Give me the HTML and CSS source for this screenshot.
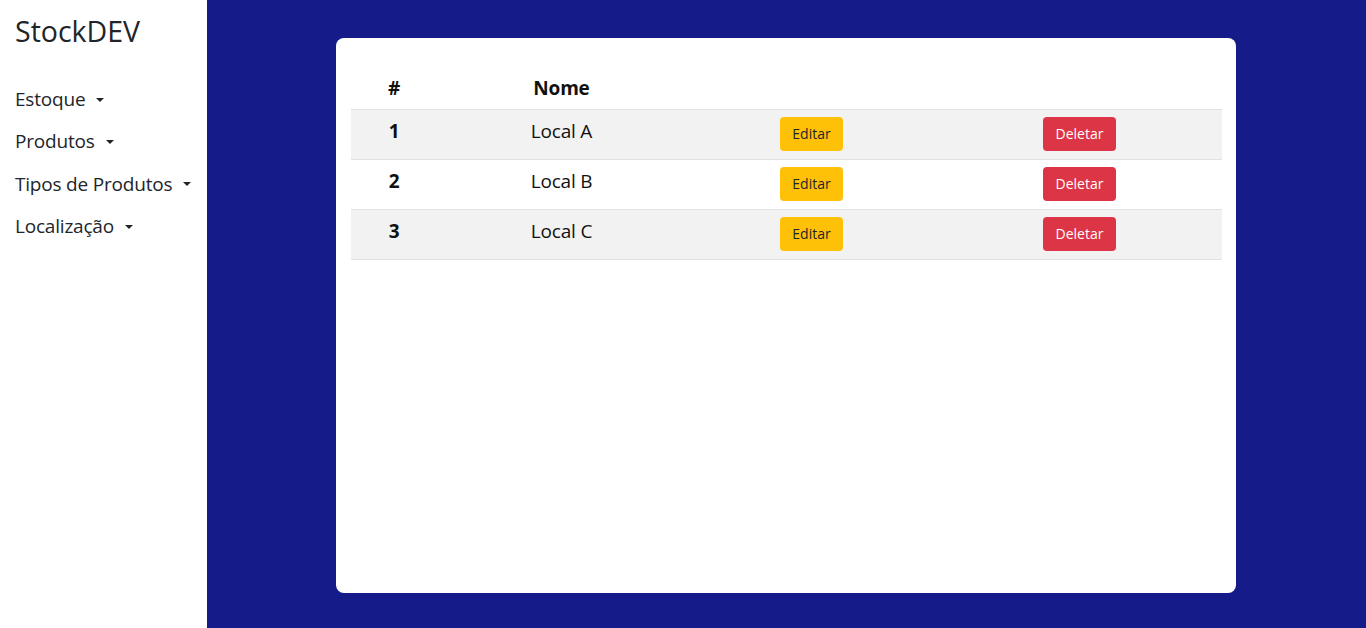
FILE: index.html
```html
<!DOCTYPE html>
<html lang="pt-BR">
<head>
<meta charset="utf-8">
<title>StockDEV</title>
<link rel="stylesheet" href="styles.css">
</head>
<body>
<div class="layout">
  <aside class="sidebar">
    <div class="brand">StockDEV</div>
    <nav class="nav">
      <a class="nav-item">Estoque<span class="caret"></span></a>
      <a class="nav-item">Produtos<span class="caret"></span></a>
      <a class="nav-item">Tipos de Produtos<span class="caret"></span></a>
      <a class="nav-item">Localização<span class="caret"></span></a>
    </nav>
  </aside>
  <main class="main">
    <section class="card">
      <table class="table">
        <colgroup>
          <col class="c1"><col class="c2"><col class="c3"><col class="c4">
        </colgroup>
        <thead>
          <tr><th>#</th><th>Nome</th><th></th><th></th></tr>
        </thead>
        <tbody>
          <tr class="odd"><th>1</th><td>Local A</td><td><button class="btn btn-warning">Editar</button></td><td><button class="btn btn-danger">Deletar</button></td></tr>
          <tr><th>2</th><td>Local B</td><td><button class="btn btn-warning">Editar</button></td><td><button class="btn btn-danger">Deletar</button></td></tr>
          <tr class="odd"><th>3</th><td>Local C</td><td><button class="btn btn-warning">Editar</button></td><td><button class="btn btn-danger">Deletar</button></td></tr>
        </tbody>
      </table>
    </section>
  </main>
</div>
</body>
</html>
```
FILE: styles.css
```css
* { box-sizing: border-box; }
html, body { margin: 0; padding: 0; }
body {
  font-family: "Open Sans", "Liberation Sans", sans-serif;
  color: #212529;
  background: #fff;
}
.layout {
  display: flex;
  height: 628px;
}
.sidebar {
  width: 207px;
  flex: 0 0 207px;
  background: #fff;
  padding: 9px 0 0 15px;
}
.brand {
  font-size: 28.5px;
  line-height: 45px;
  color: #212529;
}
.nav {
  display: flex;
  flex-direction: column;
  margin-top: 24px;
}
.nav-item {
  font-size: 19px;
  letter-spacing: -0.2px;
  line-height: 30.33px;
  padding: 6px 0;
  color: #212529;
  display: flex;
  align-items: center;
}
.caret {
  display: inline-block;
  width: 0;
  height: 0;
  margin-left: 11px;
  margin-top: 1px;
  border-top: 4.5px solid #212529;
  border-left: 4.5px solid transparent;
  border-right: 4.5px solid transparent;
}
.main {
  flex: 1;
  background: #161b8a;
  padding-top: 38px;
}
.card {
  width: 900px;
  height: 555px;
  margin-left: 129px;
  background: #fff;
  border-radius: 8px;
  padding: 29px 14px 0 15px;
}
.table {
  width: 100%;
  table-layout: fixed;
  border-collapse: collapse;
  color: #111;
}
.c1 { width: 86px; }
.c2 { width: 249px; }
.c3 { width: 251px; }
.c4 { width: 285px; }
.table th, .table td {
  font-size: 19px;
  letter-spacing: -0.2px;
  line-height: 26px;
  text-align: center;
  vertical-align: top;
}
.table thead th { padding: 8px; border-bottom: 1px solid #dee2e6; }
.table tbody th, .table tbody td { padding: 7px 8px 8px; line-height: 28px; }
.table th { font-weight: 700; }
.table td { font-weight: 400; }
.table tbody tr { border-bottom: 1px solid #dee2e6; }
.table tbody tr.odd { background: #f2f2f2; }
.btn {
  font-family: "Open Sans", "Liberation Sans", sans-serif;
  font-size: 14px;
  line-height: 20px;
  letter-spacing: 0;
  height: 34px;
  padding: 0 12px;
  border: 0;
  border-radius: 4px;
  cursor: pointer;
  vertical-align: top;
}
.btn-danger { padding: 0 13px; }
.btn-warning { background: #ffc107; color: #212529; }
.btn-danger { background: #dc3545; color: #fff; }
```
